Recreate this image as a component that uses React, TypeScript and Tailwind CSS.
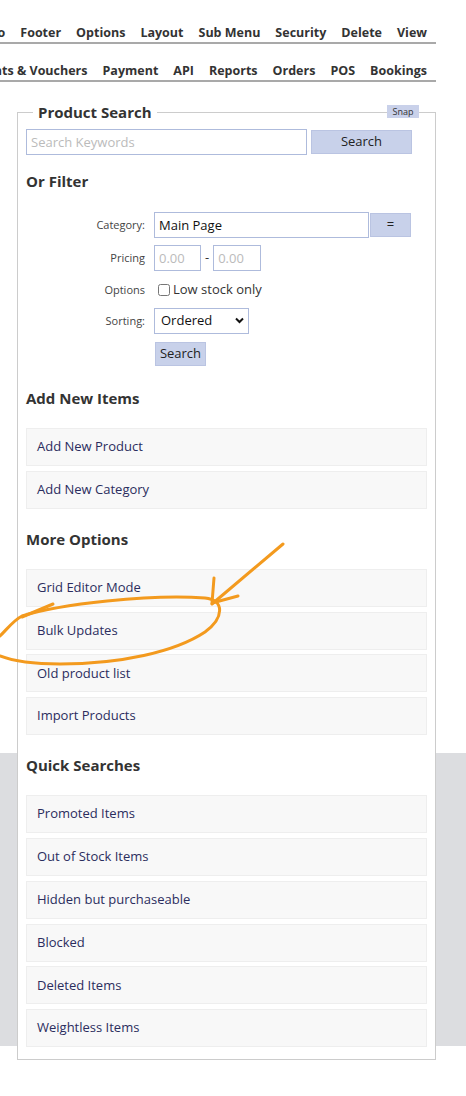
const topMenu = ['Logo', 'Footer', 'Options', 'Layout', 'Sub Menu', 'Security', 'Delete', 'View'];
const shopMenu = ['Discounts & Vouchers', 'Payment', 'API', 'Reports', 'Orders', 'POS', 'Bookings'];

const addItems = ['Add New Product', 'Add New Category'];
const moreOptions = ['Grid Editor Mode', 'Bulk Updates', 'Old product list', 'Import Products'];
const quickSearches = [
  'Promoted Items',
  'Out of Stock Items',
  'Hidden but purchaseable',
  'Blocked',
  'Deleted Items',
  'Weightless Items',
];

function MenuRow({ items, className }: { items: string[]; className?: string }) {
  return (
    <div
      className={`flex w-[436px] justify-end gap-[15px] overflow-hidden whitespace-nowrap border-b-[2px] border-[#a9a9a9] pr-[9px] pt-[1px] text-[12.5px] leading-[19px] font-bold text-[#333] ${className ?? ''}`}
    >
      {items.map((item) => (
        <span key={item}>{item}</span>
      ))}
    </div>
  );
}

function Section({ title, items, className }: { title: string; items: string[]; className: string }) {
  return (
    <div className={className}>
      <h2 className="mb-[20px] text-[15px] leading-[20px] font-bold text-[#333]">{title}</h2>
      <div className="flex flex-col gap-[4.8px]">
        {items.map((item) => (
          <a
            key={item}
            href="#"
            className="flex h-[38px] items-center border border-[#eeeeee] bg-[#f8f8f8] pl-[10px] text-[13px] text-[#2b2d5e]"
          >
            {item}
          </a>
        ))}
      </div>
    </div>
  );
}

export default function App() {
  return (
    <div
      className="relative min-h-[1096px] overflow-hidden bg-[linear-gradient(to_bottom,#fff_0,#fff_753px,#dcdde0_753px,#dcdde0_1046px,#fff_1046px)] pt-[22px] font-['Open_Sans',sans-serif]"
    >
      {/* top menus */}
      <MenuRow items={topMenu} />
      <MenuRow items={shopMenu} className="mt-[16px]" />

      {/* product search box */}
      <div className="relative mt-[30px] ml-[17px] w-[419px] border border-[#cccccc] bg-white px-[8px] pt-[16px] pb-[12px]">
        <div className="absolute -top-[11px] left-[15px] bg-white px-[5px] text-[15px] leading-[20px] font-bold text-[#333]">
          Product Search
        </div>
        <div className="absolute -top-[8px] right-[16px] flex h-[13px] w-[32px] items-center justify-center bg-[#c9d1ea] text-[9px] text-[#333]">
          Snap
        </div>

        <div className="flex items-center gap-[4px]">
          <input
            placeholder="Search Keywords"
            className="h-[26px] w-[281px] border border-[#aebbdc] px-[4px] text-[13px] text-[#111] placeholder:text-[#bbb] outline-none"
          />
          <button className="h-[24px] w-[101px] border border-[#bac4e2] bg-[#c8d1ea] text-[13px] text-[#222]">
            Search
          </button>
        </div>

        <h2 className="mt-[16px] text-[15px] leading-[20px] font-bold text-[#333]">Or Filter</h2>

        {/* filter form */}
        <div className="mt-[21px] flex flex-col text-[11px] text-[#444]">
          <div className="flex items-center gap-[9px]">
            <span className="w-[119px] text-right">Category:</span>
            <div className="flex items-center gap-[1px]">
              <input
                defaultValue="Main Page"
                className="h-[26px] w-[215px] border border-[#aebbdc] px-[4px] text-[13px] text-[#111] outline-none"
              />
              <button className="h-[24px] w-[41px] border border-[#bac4e2] bg-[#c8d1ea] text-[13px] text-[#222]">
                =
              </button>
            </div>
          </div>
          <div className="mt-[7px] flex items-center gap-[9px]">
            <span className="w-[119px] text-right">Pricing</span>
            <div className="flex items-center">
              <input
                placeholder="0.00"
                className="h-[26px] w-[47px] border border-[#aebbdc] px-[4px] text-[13px] placeholder:text-[#bbb] outline-none"
              />
              <span className="px-[4px] text-[13px] text-[#333]">-</span>
              <input
                placeholder="0.00"
                className="h-[26px] w-[48px] border border-[#aebbdc] px-[4px] text-[13px] placeholder:text-[#bbb] outline-none"
              />
            </div>
          </div>
          <div className="mt-[9px] flex h-[20px] items-center gap-[9px]">
            <span className="w-[119px] text-right">Options</span>
            <label className="flex items-center gap-[3px] pl-[4px] text-[13px] text-[#333]">
              <input type="checkbox" className="m-0 h-[12px] w-[12px]" />
              Low stock only
            </label>
          </div>
          <div className="mt-[8px] flex items-center gap-[9px]">
            <span className="w-[119px] text-right">Sorting:</span>
            <div className="relative">
              <select className="h-[26px] w-[95px] appearance-none border border-[#aebbdc] bg-white pl-[6px] text-[13px] text-[#111] outline-none">
                <option>Ordered</option>
              </select>
              <svg
                className="pointer-events-none absolute top-[9px] right-[5px]"
                width="9"
                height="7"
                viewBox="0 0 9 7"
              >
                <path d="M1 1.5 L4.5 5 L8 1.5" fill="none" stroke="#111" strokeWidth="2" />
              </svg>
            </div>
          </div>
          <div className="mt-[8px] flex items-center gap-[10px]">
            <span className="w-[119px]" />
            <button className="h-[24px] w-[51px] border border-[#bac4e2] bg-[#c8d1ea] text-[13px] text-[#222]">
              Search
            </button>
          </div>
        </div>

        <Section title="Add New Items" items={addItems} className="mt-[22px]" />
        <Section title="More Options" items={moreOptions} className="mt-[20px]" />
        <Section title="Quick Searches" items={quickSearches} className="mt-[20px]" />
      </div>

      {/* hand-drawn annotation */}
      <svg
        className="pointer-events-none absolute top-0 left-0"
        width="466"
        height="1096"
        viewBox="0 0 466 1096"
        fill="none"
        stroke="#f39a1e"
        strokeWidth="3"
        strokeLinecap="round"
        strokeLinejoin="round"
      >
        <path d="M283 544 Q250 572 212 604" />
        <path d="M214 578 L212 603 L238 596" />
        <path d="M0 636 C8 628 14 620 22 616 C60 604 150 594 205 598 C225 600 224 618 205 632 C175 652 120 664 60 664 C30 664 10 660 0 656" />
        <path d="M53 604 L22 617" />
      </svg>
    </div>
  );
}
